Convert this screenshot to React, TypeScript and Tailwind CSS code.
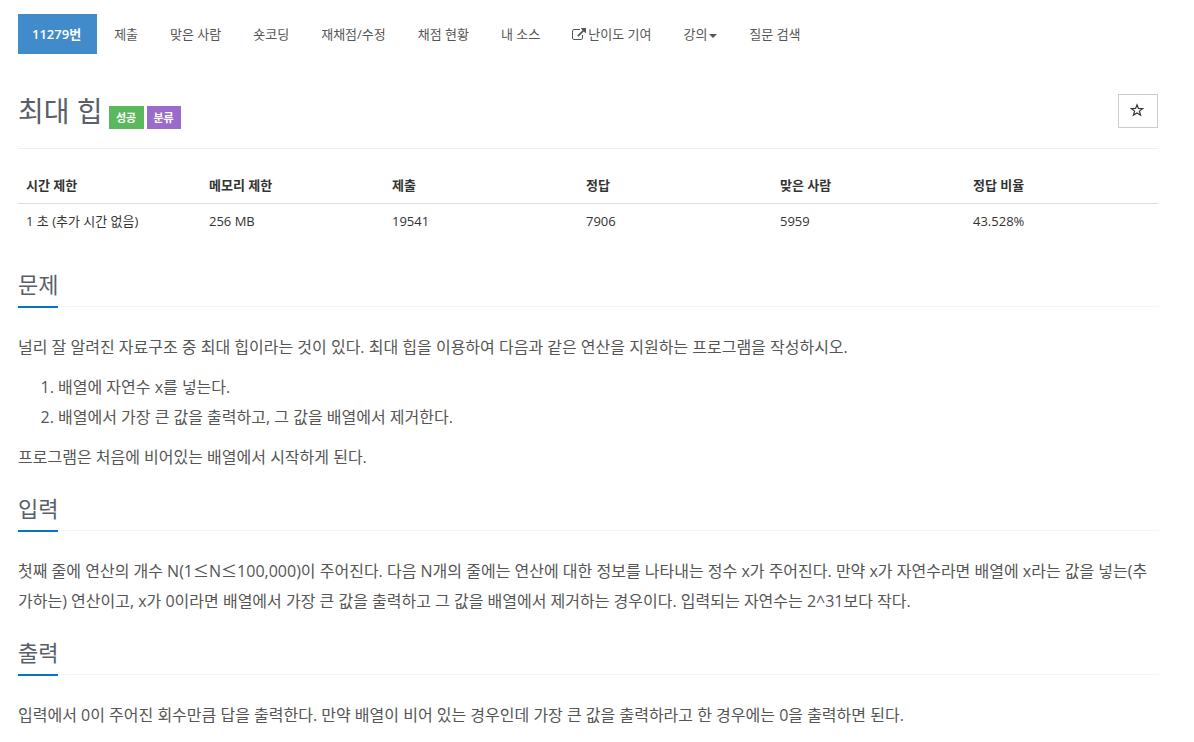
import type { ReactNode } from "react"
import clsx from "clsx"

const menu = [
  { title: "11279번", active: true },
  { title: "제출" },
  { title: "맞은 사람" },
  { title: "숏코딩" },
  { title: "재채점/수정" },
  { title: "채점 현황" },
  { title: "내 소스" },
  { title: "난이도 기여", external: true },
  { title: "강의", dropdown: true },
  { title: "질문 검색" },
]

const info = [
  { label: "시간 제한", value: "1 초 (추가 시간 없음)", width: "w-[183px]" },
  { label: "메모리 제한", value: "256 MB", width: "w-[183px]" },
  { label: "제출", value: "19541", width: "w-[194px]" },
  { label: "정답", value: "7906", width: "w-[194px]" },
  { label: "맞은 사람", value: "5959", width: "w-[193px]" },
  { label: "정답 비율", value: "43.528%", width: "w-[193px]" },
]

function ExternalIcon() {
  return (
    <svg viewBox="0 0 1792 1792" className="mr-[2px] h-[14px] w-[14px]" fill="currentColor">
      <path d="M1408 928v320q0 119-84.500 203.500t-203.500 84.500h-832q-119 0-203.500-84.500t-84.500-203.500v-832q0-119 84.500-203.500t203.500-84.500h704q14 0 23 9t9 23v64q0 14-9 23t-23 9h-704q-66 0-113 47t-47 113v832q0 66 47 113t113 47h832q66 0 113-47t47-113v-320q0-14 9-23t23-9h64q14 0 23 9t9 23zm384-864v512q0 26-19 45t-45 19-45-19l-176-176-652 652q-10 10-23 10t-23-10l-114-114q-10-10-10-23t10-23l652-652-176-176q-19-19-19-45t19-45 45-19h512q26 0 45 19t19 45z" />
    </svg>
  )
}

function StarIcon() {
  return (
    <svg viewBox="0 0 14 14" className="h-[14px] w-[14px]" fill="none" stroke="currentColor" strokeWidth="1.2">
      <path d="M7 1.800L8.400 5.400L12.600 5.600L9.400 8.100L10.600 12.200L7 9.900L3.400 12.200L4.600 8.100L1.400 5.600L5.600 5.400Z" />
    </svg>
  )
}

function Menu() {
  return (
    <ul className="flex h-10 gap-[2px] text-[13px]">
      {menu.map((item) => (
        <li
          key={item.title}
          className={clsx(
            "flex items-center pt-[2px] whitespace-nowrap",
            item.active ? "bg-[#428bca] pr-4 pl-[14px] font-semibold text-white" : "px-[15px]"
          )}
        >
          {item.external && <ExternalIcon />}
          {item.title}
          {item.dropdown && (
            <span className="mt-[2px] ml-[2px] border-x-4 border-t-4 border-x-transparent border-t-[#555]" />
          )}
        </li>
      ))}
    </ul>
  )
}

// the Korean font draws this sign full width
function Leq() {
  return <span className="inline-block font-['Noto_Sans_CJK_KR',sans-serif] leading-none">≤</span>
}

function Section({ title, children }: { title: string; children: ReactNode }) {
  return (
    <section>
      <div className="mb-[25px] flex h-[38px] border-b border-dotted border-[#e4e9f0]">
        <h2 className="h-[39px] border-b-2 border-[#0076bd] text-[22px] leading-[31px] text-[#585f69]">
          {title}
        </h2>
      </div>
      <div className="mb-[21px] text-[16px] leading-[30px]">{children}</div>
    </section>
  )
}

export default function App() {
  return (
    <div className="h-[742px] overflow-hidden bg-white pt-[14px] pl-[18px] font-['Open_Sans','Noto_Sans_CJK_KR',sans-serif] text-[#555]">
      <div className="w-[1140px]">
        <Menu />

        <div className="mt-10 flex h-[55px] items-start justify-between border-b border-[#eee]">
          <div className="flex">
            <h1 className="text-[28px] leading-[34px] text-[#585f69]">최대 힙</h1>
            <div className="mt-3 ml-[6px] flex gap-[3px] text-[11px] leading-[23px] font-bold text-white">
              <span className="h-[23px] w-[35px] bg-[#5cb85c] text-center">성공</span>
              <span className="h-[23px] w-[34px] bg-[#9b6bcc] text-center">분류</span>
            </div>
          </div>
          <button className="flex h-[34px] w-10 items-center justify-center border border-[#ccc] pr-[2px] pb-[2px] text-[#333]">
            <StarIcon />
          </button>
        </div>

        <table className="mt-5 w-full table-fixed text-left text-[13px] leading-[18px] text-[#333]">
          <thead>
            <tr className="border-b border-[#ddd]">
              {info.map((item) => (
                <th key={item.label} className={clsx("px-2 pt-[7px] pb-[9px] font-bold", item.width)}>
                  {item.label}
                </th>
              ))}
            </tr>
          </thead>
          <tbody>
            <tr>
              {info.map((item) => (
                <td key={item.label} className="px-2 py-2">
                  {item.value}
                </td>
              ))}
            </tr>
          </tbody>
        </table>

        <div className="mt-[31px]">
          <Section title="문제">
            <p>
              널리 잘 알려진 자료구조 중 최대 힙이라는 것이 있다. 최대 힙을 이용하여 다음과 같은 연산을
              지원하는 프로그램을 작성하시오.
            </p>
            <ol className="my-[10px] list-decimal pl-10">
              <li>배열에 자연수 x를 넣는다.</li>
              <li>배열에서 가장 큰 값을 출력하고, 그 값을 배열에서 제거한다.</li>
            </ol>
            <p>프로그램은 처음에 비어있는 배열에서 시작하게 된다.</p>
          </Section>

          <Section title="입력">
            <p>
              첫째 줄에 연산의 개수 N(1
              <Leq />N
              <Leq />
              100,000)이 주어진다. 다음 N개의 줄에는 연산에 대한 정보를 나타내는 정수 x가 주어진다. 만약
              x가 자연수라면 배열에 x라는 값을 넣는(추가하는) 연산이고, x가 0이라면 배열에서 가장 큰
              값을 출력하고 그 값을 배열에서 제거하는 경우이다. 입력되는 자연수는 2^31보다 작다.
            </p>
          </Section>

          <Section title="출력">
            <p>
              입력에서 0이 주어진 회수만큼 답을 출력한다. 만약 배열이 비어 있는 경우인데 가장 큰 값을
              출력하라고 한 경우에는 0을 출력하면 된다.
            </p>
          </Section>
        </div>
      </div>
    </div>
  )
}
